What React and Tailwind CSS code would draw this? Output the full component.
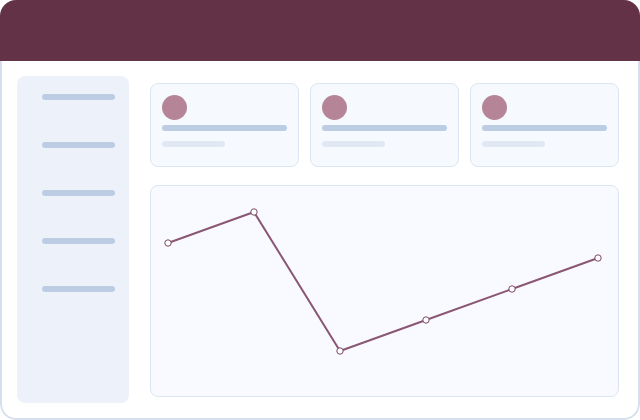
import React from 'react';

const navItems = [0, 1, 2, 3, 4];
const stats = [0, 1, 2];

// chart points, in the chart card's own coordinates
const points = [
    [18, 58],
    [104, 27],
    [190, 166],
    [276, 135],
    [362, 104],
    [448, 73],
];

const StatCard = () => (
    <div className="flex-1 min-w-0 h-[84px] rounded-lg border border-[#dce5f2] bg-[#f6f9fe] px-[11px] pt-[11px]">
        <div className="w-[25px] h-[25px] rounded-full bg-[#b58496]" />
        <div className="mt-[5px] h-[6px] rounded-full bg-[#bccde3]" />
        <div className="mt-[10px] h-[6px] w-[63px] rounded-full bg-[#e0e8f3]" />
    </div>
);

const Chart = () => (
    <div className="flex-1 min-h-0 rounded-lg border border-[#dce5f2] bg-[#f8faff] overflow-hidden">
        <svg width="100%" height="100%" viewBox="1 1 468 210" preserveAspectRatio="xMinYMin slice" className="block">
            <polyline
                points={points.map(p => p.join(',')).join(' ')}
                fill="none"
                stroke="#8a5673"
                strokeWidth="2"
                strokeLinejoin="round"
            />
            {points.map(([x, y], i) => (
                <circle key={i} cx={x} cy={y} r="3.2" fill="#ffffff" stroke="#7d4863" strokeWidth="1" />
            ))}
        </svg>
    </div>
);

export default function App() {
    return (
        <div className="w-[640px] h-[420px] flex flex-col rounded-[16px] overflow-hidden bg-white">
            <div className="h-[61px] shrink-0 bg-[#633246]" />
            <div className="flex-1 flex border-x-2 border-b-2 border-[#d5dfed] rounded-b-[16px] pl-[15px] pr-[19px] pt-[15px] pb-[15px] gap-[21px]">
                <div className="w-[112px] shrink-0 rounded-lg bg-[#edf2fa] pt-[18px] flex flex-col gap-[42px]">
                    {navItems.map(i => (
                        <div key={i} className="ml-[25px] w-[73px] h-[6px] rounded-full bg-[#bccde3]" />
                    ))}
                </div>
                <div className="flex-1 min-w-0 flex flex-col pt-[7px] pb-[6px] gap-[18px]">
                    <div className="flex gap-[11px]">
                        {stats.map(i => (
                            <StatCard key={i} />
                        ))}
                    </div>
                    <Chart />
                </div>
            </div>
        </div>
    );
}
